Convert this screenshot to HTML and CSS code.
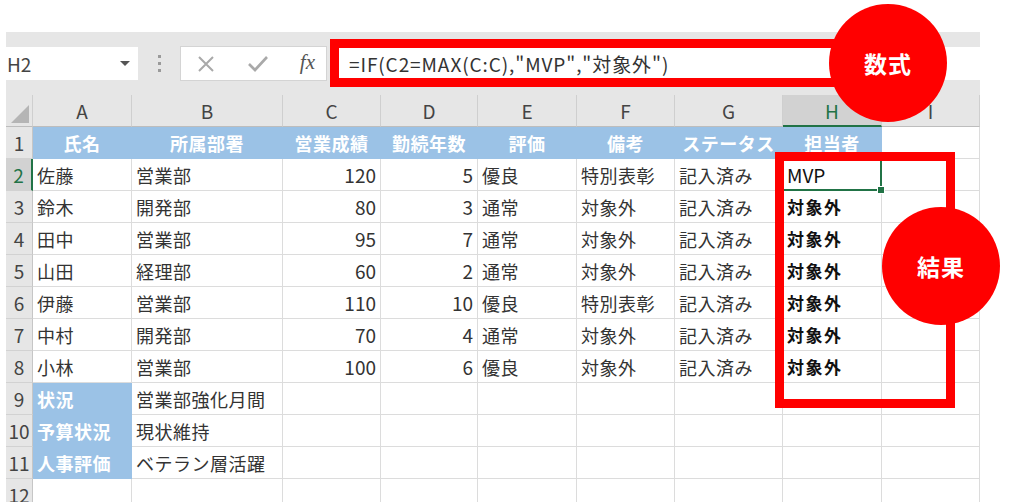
FILE: index.html
```html
<!DOCTYPE html>
<html lang="ja">
<head>
<meta charset="utf-8">
<link rel="stylesheet" href="styles.css">
</head>
<body>
<div class="excel">
  <div class="toolbar">
    <div class="namebox"><span>H2</span><span class="dd"></span></div>
    <div class="dots"><i></i><i></i><i></i></div>
    <div class="btns">
      <svg class="ic" width="20" height="20" viewBox="0 0 20 20"><path d="M3 3 L17 17 M17 3 L3 17" stroke="#a9a9a9" stroke-width="2" fill="none"/></svg>
      <svg class="ic" width="22" height="20" viewBox="0 0 22 20"><path d="M2 10 L8 16 L20 3" stroke="#a9a9a9" stroke-width="2.6" fill="none"/></svg>
      <span class="fx">fx</span>
    </div>
    <div class="formula">=IF(C2=MAX(C:C),"MVP","対象外")</div>
  </div>
  <div class="sheet">
    <div class="corner"><span class="tri"></span></div>
    <div class="ch">A</div><div class="ch">B</div><div class="ch">C</div><div class="ch">D</div><div class="ch">E</div><div class="ch">F</div><div class="ch">G</div><div class="ch sel">H</div><div class="ch">I</div>

    <div class="rh">1</div>
    <div class="c hd">氏名</div><div class="c hd">所属部署</div><div class="c hd">営業成績</div><div class="c hd">勤続年数</div><div class="c hd">評価</div><div class="c hd">備考</div><div class="c hd">ステータス</div><div class="c hd">担当者</div><div class="c"></div>

    <div class="rh rsel">2</div>
    <div class="c">佐藤</div><div class="c">営業部</div><div class="c num">120</div><div class="c num">5</div><div class="c">優良</div><div class="c">特別表彰</div><div class="c">記入済み</div><div class="c active">MVP</div><div class="c"></div>

    <div class="rh">3</div>
    <div class="c">鈴木</div><div class="c">開発部</div><div class="c num">80</div><div class="c num">3</div><div class="c">通常</div><div class="c">対象外</div><div class="c">記入済み</div><div class="c res">対象外</div><div class="c"></div>

    <div class="rh">4</div>
    <div class="c">田中</div><div class="c">営業部</div><div class="c num">95</div><div class="c num">7</div><div class="c">通常</div><div class="c">対象外</div><div class="c">記入済み</div><div class="c res">対象外</div><div class="c"></div>

    <div class="rh">5</div>
    <div class="c">山田</div><div class="c">経理部</div><div class="c num">60</div><div class="c num">2</div><div class="c">通常</div><div class="c">対象外</div><div class="c">記入済み</div><div class="c res">対象外</div><div class="c"></div>

    <div class="rh">6</div>
    <div class="c">伊藤</div><div class="c">営業部</div><div class="c num">110</div><div class="c num">10</div><div class="c">優良</div><div class="c">特別表彰</div><div class="c">記入済み</div><div class="c res">対象外</div><div class="c"></div>

    <div class="rh">7</div>
    <div class="c">中村</div><div class="c">開発部</div><div class="c num">70</div><div class="c num">4</div><div class="c">通常</div><div class="c">対象外</div><div class="c">記入済み</div><div class="c res">対象外</div><div class="c"></div>

    <div class="rh">8</div>
    <div class="c">小林</div><div class="c">営業部</div><div class="c num">100</div><div class="c num">6</div><div class="c">優良</div><div class="c">対象外</div><div class="c">記入済み</div><div class="c res">対象外</div><div class="c"></div>

    <div class="rh">9</div>
    <div class="c lab">状況</div><div class="c">営業部強化月間</div><div class="c"></div><div class="c"></div><div class="c"></div><div class="c"></div><div class="c"></div><div class="c"></div><div class="c"></div>

    <div class="rh">10</div>
    <div class="c lab">予算状況</div><div class="c">現状維持</div><div class="c"></div><div class="c"></div><div class="c"></div><div class="c"></div><div class="c"></div><div class="c"></div><div class="c"></div>

    <div class="rh">11</div>
    <div class="c lab">人事評価</div><div class="c">ベテラン層活躍</div><div class="c"></div><div class="c"></div><div class="c"></div><div class="c"></div><div class="c"></div><div class="c"></div><div class="c"></div>

    <div class="rh">12</div>
    <div class="c"></div><div class="c"></div><div class="c"></div><div class="c"></div><div class="c"></div><div class="c"></div><div class="c"></div><div class="c"></div><div class="c"></div>
  </div>
</div>

<div class="frame frame-formula"></div>
<div class="frame frame-result"></div>
<div class="badge badge-formula">数式</div>
<div class="badge badge-result">結果</div>
</body>
</html>
```
FILE: styles.css
```css
html, body {
  margin: 0;
  padding: 0;
  background: #ffffff;
}
body {
  position: relative;
  width: 1024px;
  height: 502px;
  overflow: hidden;
  font-family: "Noto Sans CJK JP", "Noto Sans", sans-serif;
  color: #333333;
}
.excel {
  margin-top: 32px;
  margin-left: 6px;
  width: 974px;
}
.toolbar {
  height: 63px;
  background: #e6e6e6;
  display: flex;
  align-items: center;
}
.namebox {
  width: 132px;
  height: 33px;
  background: #ffffff;
  display: flex;
  align-items: center;
  justify-content: space-between;
  padding: 0 8px 0 1px;
  box-sizing: border-box;
  font-size: 19px;
  color: #444444;
}
.dd {
  width: 0;
  height: 0;
  border-left: 5px solid transparent;
  border-right: 5px solid transparent;
  border-top: 5px solid #555555;
}
.dots {
  width: 42px;
  display: flex;
  flex-direction: column;
  align-items: center;
  gap: 4px;
}
.dots i {
  width: 3px;
  height: 3px;
  background: #9a9a9a;
}
.btns {
  width: 147px;
  height: 35px;
  box-sizing: border-box;
  background: #ffffff;
  border: 1px solid #d4d4d4;
  display: flex;
  align-items: center;
  justify-content: space-between;
  padding: 0 11px 0 15px;
}
.fx {
  font-family: "Liberation Serif", serif;
  font-style: italic;
  font-size: 21px;
  color: #555555;
  line-height: 1;
  padding-bottom: 3px;
}
.formula {
  margin-left: 3px;
  flex: 1;
  height: 33px;
  background: #ffffff;
  display: flex;
  align-items: center;
  padding-left: 19px;
  font-size: 19px;
  letter-spacing: 0.9px;
  color: #333333;
  white-space: nowrap;
}
.sheet {
  display: grid;
  grid-template-columns: 27px 99px 151px 98px 97px 99px 98px 108px 99px 98px;
  grid-auto-rows: 32px;
}
.corner {
  position: relative;
  background: #e6e6e6;
  border-right: 1px solid #cfcfcf;
  border-bottom: 1px solid #bdbdbd;
}
.tri {
  position: absolute;
  right: 3px;
  bottom: 3px;
  width: 0;
  height: 0;
  border-left: 18px solid transparent;
  border-bottom: 18px solid #b5b5b5;
}
.ch {
  background: #e6e6e6;
  border-right: 1px solid #cfcfcf;
  border-bottom: 1px solid #bdbdbd;
  display: flex;
  align-items: center;
  justify-content: center;
  font-size: 19px;
  color: #444444;
}
.ch.sel {
  background: #d2d2d2;
  color: #217346;
  border-bottom: 2px solid #217346;
}
.rh {
  background: #e6e6e6;
  border-right: 1px solid #c6c6c6;
  border-bottom: 1px solid #d2d2d2;
  display: flex;
  align-items: center;
  justify-content: center;
  font-size: 19px;
  color: #444444;
}
.rh.rsel {
  background: #d2d2d2;
  color: #217346;
  border-right: 2px solid #217346;
}
.c {
  border-right: 1px solid #dcdcdc;
  border-bottom: 1px solid #dcdcdc;
  display: flex;
  align-items: center;
  padding: 0 4px;
  white-space: nowrap;
  font-size: 18px;
  color: #333333;
  letter-spacing: 0.5px;
}
.c.num {
  justify-content: flex-end;
  font-size: 19px;
  letter-spacing: 0;
}
.c.hd {
  background: #9bc2e6;
  border-color: #9bc2e6;
  color: #ffffff;
  font-weight: 700;
  justify-content: center;
}
.c.lab {
  background: #9bc2e6;
  border-color: #9bc2e6;
  color: #ffffff;
  font-weight: 700;
}
.c.res {
  font-weight: 700;
  font-size: 17px;
  color: #111111;
  letter-spacing: 1.5px;
}
.c.active {
  position: relative;
  color: #111111;
  font-size: 19px;
  letter-spacing: 0;
}
.c.active::after {
  content: "";
  position: absolute;
  left: -1px;
  top: -1px;
  right: -1px;
  bottom: -1px;
  border: 2px solid #217346;
}
.c.active::before {
  content: "";
  position: absolute;
  right: -4px;
  bottom: -4px;
  width: 6px;
  height: 6px;
  background: #217346;
  border: 1px solid #ffffff;
  z-index: 1;
}
.frame {
  position: absolute;
  border: 9px solid #ff0000;
  box-sizing: border-box;
}
.frame-formula {
  left: 330px;
  top: 39px;
  width: 530px;
  height: 48px;
}
.frame-result {
  left: 775px;
  top: 152px;
  width: 180px;
  height: 256px;
}
.badge {
  position: absolute;
  width: 118px;
  height: 118px;
  border-radius: 50%;
  background: #ff0000;
  color: #ffffff;
  font-weight: 700;
  font-size: 23px;
  display: flex;
  align-items: center;
  justify-content: center;
  letter-spacing: 1px;
}
.badge-formula {
  left: 829px;
  top: 4px;
}
.badge-result {
  left: 882px;
  top: 207px;
}
```
